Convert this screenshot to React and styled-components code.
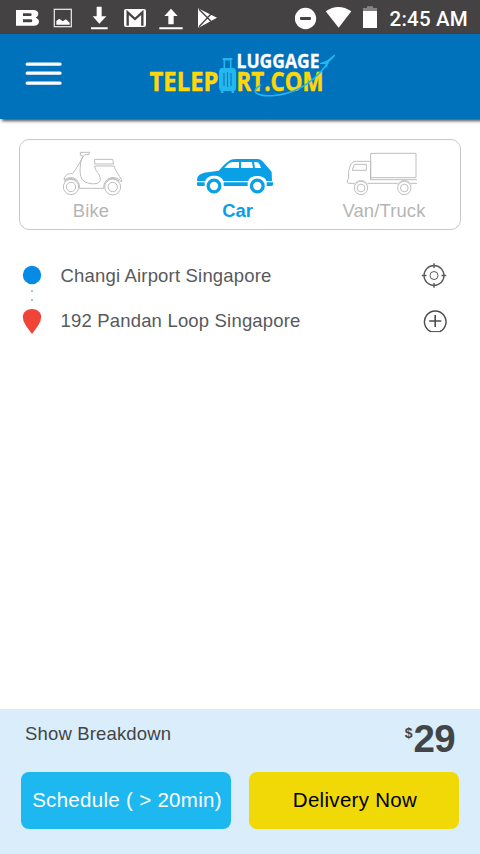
import React from 'react';
import styled, { createGlobalStyle } from 'styled-components';

const GlobalStyle = createGlobalStyle`
  * { box-sizing: border-box; }
  body { margin: 0; background: #fff; font-family: "Liberation Sans", Arial, sans-serif; }
  svg { display: block; flex: none; }
  button { font: inherit; border: 0; padding: 0; background: none; }
`;

const Screen = styled.div`
  width: 480px;
  height: 854px;
  display: flex;
  flex-direction: column;
  overflow: hidden;
  background: #fff;
`;

const StatusBar = styled.div`
  height: 34px;
  flex: none;
  display: flex;
  align-items: center;
  justify-content: space-between;
  background: #444243;
  color: #fff;
  padding-right: 12px;
`;

const StatusRight = styled.div`
  display: flex;
  align-items: center;
`;

const Clock = styled.span`
  font: 500 20.5px/34px Roboto, sans-serif;
  letter-spacing: 0.2px;
  padding-top: 4px;
  margin-left: 11px;
  white-space: nowrap;
`;

const Header = styled.header`
  height: 85px;
  flex: none;
  display: flex;
  align-items: flex-start;
  background: #0071bb;
  box-shadow: 2px 2px 3px rgba(0, 0, 0, 0.7);
`;

const MenuButton = styled.button`
  display: flex;
  margin: 26px 0 0 25px;
`;

const LogoLink = styled.div`
  margin: 10px 0 0 83px;
`;

const Main = styled.main`
  flex: 1;
  padding: 20px 19px 0;
`;

const VehicleCard = styled.div`
  height: 91px;
  display: flex;
  justify-content: space-between;
  border: 1px solid #c9c9c9;
  border-radius: 10px;
  padding: 0 34px 0 29px;
`;

const Vehicle = styled.button`
  width: 84px;
  display: flex;
  flex-direction: column;
  align-items: center;
  color: ${({ $active }) => ($active ? '#0aa0e6' : '#b5b5b5')};
`;

const VehicleArt = styled.div`
  height: 59px;
  display: flex;
  align-items: flex-end;
  padding-bottom: 3px;
  margin-left: ${({ $shift }) => $shift || 0}px;
`;

const VehicleLabel = styled.span`
  font-size: 18.4px;
  line-height: 24px;
  font-weight: ${({ $bold }) => ($bold ? 700 : 400)};
  letter-spacing: ${({ $track }) => $track}px;
  white-space: nowrap;
`;

const Route = styled.div`
  display: grid;
  grid-template-columns: 26px 1fr 26px;
  grid-template-rows: 45px 45px;
  align-items: center;
  margin-top: 23px;
  padding: 0 14px 0 0;
`;

const RouteMarks = styled.div`
  grid-row: 1 / 3;
  align-self: start;
  padding: 12px 0 0 3px;
`;

const Place = styled.span`
  font-size: 18.5px;
  line-height: 24px;
  letter-spacing: 0.18px;
  color: #58595b;
  padding-left: 15.5px;
  white-space: nowrap;
`;

const RouteAction = styled.button`
  width: 26px;
  height: 26px;
`;

const Footer = styled.footer`
  height: 145px;
  flex: none;
  background: #daedfb;
  padding: 11px 21px 0;
`;

const Summary = styled.div`
  height: 52px;
  display: flex;
  justify-content: space-between;
  align-items: flex-start;
  color: #414548;
  padding: 0 4px;
`;

const Breakdown = styled.button`
  font-size: 18.5px;
  line-height: 28px;
  letter-spacing: 0.16px;
  color: inherit;
`;

const Price = styled.div`
  display: flex;
  align-items: flex-start;
  font-weight: 700;
  font-size: 38.5px;
  line-height: 38px;
  letter-spacing: -0.6px;
`;

const Currency = styled.span`
  font-size: 14px;
  line-height: 27px;
  margin-right: 1.5px;
`;

const Actions = styled.div`
  display: flex;
  justify-content: space-between;
`;

const ActionButton = styled.button`
  width: 210px;
  height: 57px;
  border-radius: 8px;
  font-size: 20.5px;
  line-height: 55px;
  letter-spacing: 0.3px;
  padding: 0 0 2px 2px;
  white-space: nowrap;
  color: ${({ $primary }) => ($primary ? '#000' : '#fff')};
  background: ${({ $primary }) => ($primary ? '#f0d907' : '#1eb8f0')};
`;

const Notifications = () => (
  <svg width="230" height="34" viewBox="0 0 690 102" fill="#fff">
    <path fillRule="evenodd" d="M48 30H100Q115 31 115 42Q115 50 107 53Q117 56 117 65Q116 77 101 77H48ZM69 40V48H91Q95 48 95 44Q95 40 91 40ZM69 58V67H92Q97 67 97 62Q97 58 92 58Z" />
    <rect x="163" y="28" width="51" height="52" fill="none" stroke="#ddd" strokeWidth="4" />
    <path d="M169 74V63L178 56L188 64L198 58L209 68V74Z" />
    <path d="M290 20H305V49H319L298 71L278 49H290ZM273 82H323V88H273Z" />
    <rect x="372" y="27" width="66" height="54" rx="6" />
    <path d="M383 77V37L405 57L427 37V77" fill="none" stroke="#444243" strokeWidth="7" />
    <path d="M513 26L533 48H521V73H505V48H493ZM478 82H548V88H478Z" />
    <path d="M594 26Q595 24 600 28L651 53L600 81Q594 84 594 80Z" />
    <path d="M597 28L638 69M597 80L638 37" fill="none" stroke="#444243" strokeWidth="4" />
  </svg>
);

const SystemIcons = () => (
  <svg width="84" height="34" viewBox="48 0 252 102" fill="#fff">
    <circle cx="79.500" cy="55.500" r="32" />
    <rect x="63" y="51" width="33" height="9" rx="3" fill="#444243" />
    <path d="M140 34Q178 8 217 34L179 83Z" />
    <path d="M252 32H294V84H252Z" />
    <path d="M264 19H282V24H294V32H252V24H264Z" fill="#858384" />
  </svg>
);

const MenuIcon = () => (
  <svg width="37" height="28" viewBox="0 0 37 28" fill="none" stroke="#fff" strokeWidth="3.3" strokeLinecap="round">
    <path d="M2.200 4.200H35M2.200 13.200H35M2.200 23.200H35" />
  </svg>
);

const Logo = () => (
  <svg width="192" height="64" viewBox="0 -6 192 64">
    <g fontFamily="'Open Sans', 'Noto Sans', sans-serif" fontWeight="700">
      <g fill="#ffd60a" stroke="#ffd60a" strokeWidth=".5" fontSize="27.500">
        <text x="4.500" y="41.300" textLength="69" lengthAdjust="spacingAndGlyphs">TELEP</text>
        <text x="91.500" y="41.300" textLength="87" lengthAdjust="spacingAndGlyphs">RT.COM</text>
      </g>
      <text x="91.500" y="18.300" fill="#fff" stroke="#fff" strokeWidth=".3" fontSize="19.500" textLength="83" lengthAdjust="spacingAndGlyphs">LUGGAGE</text>
    </g>
    <g fill="#22b7ef">
      <path fillRule="evenodd" d="M78 8H87Q87.500 8 87.500 10H86.500V18H89Q91 19 91 22V37Q91 41 89 41V43H86.500V41H78.500V43H76V41Q74 40 74 37V22Q74 19 76 18H78.500V10H77.500Q77.500 8 78 8ZM80 10.500V18H85V10.500Z" />
      <path d="M188 5.500Q190.500 4 190 6L184 12L182 17L180.500 17.500L180.500 14L175 14L175 13L182 10.500Z" />
    </g>
    <path d="M79 23V36M82.500 22V37M86 23V36" stroke="#176fab" strokeWidth="1" />
    <path d="M116 35Q108 39 111 43C119 48 139 46 153 39C166 33 175 24 183 13" fill="none" stroke="#22b7ef" strokeWidth="1.500" />
  </svg>
);

const BikeIcon = () => (
  <svg width="62" height="46" viewBox="156 60 186 138" fill="none" stroke="#b8b8b8" strokeWidth="2.800" strokeLinejoin="round">
    <path d="M211 67H239L237 73L225 74C216 81 211 92 211 108C209 130 210 153 233 159Q247 163 258 161Q272 158 271 146C270 129 254 125 254 108H312C316 123 329 138 335 150L334 156C327 145 315 142 306 143C292 145 281 156 281 175H209C209 158 201 145 187 143Q171 142 162 150Q164 134 178 131H187C199 117 209 99 220 79L211 76Z" />
    <path d="M254 88H308L311 102H254Z" />
    <circle cx="183" cy="171" r="23" /><circle cx="183" cy="171" r="14" />
    <circle cx="308" cy="171" r="24" /><circle cx="308" cy="171" r="14" />
    <path d="M162 155Q179 137 200 152M286 154Q306 136 328 153" />
  </svg>
);

const CarIcon = () => (
  <svg width="78" height="38" viewBox="78 84 234 114" fill="#0aa0e6">
    <path fillRule="evenodd" d="M81 153C81 137 91 129 113 127L146 122C157 110 168 98 181 90Q187 87 200 87H264Q273 87 279 95C288 106 298 116 305 126L306 153H289C284 133 239 133 235 153H160C154 132 111 132 106 153ZM163 114H207V96H188Q178 97 173 103ZM213 96V114H249L246 96ZM252 96L255 114H273Q269 100 263 97Z" />
    <path d="M81 157H104V168H84Q81 168 81 163ZM161 157H233V168H161ZM290 157H309V164Q308 168 303 168H290Z" />
    <circle cx="132" cy="168" r="17.500" fill="#fff" stroke="#0aa0e6" strokeWidth="10" />
    <circle cx="262" cy="168" r="17.500" fill="#fff" stroke="#0aa0e6" strokeWidth="10" />
  </svg>
);

const TruckIcon = () => (
  <svg width="72" height="45" viewBox="78 63 216 135" fill="none" stroke="#b8b8b8" strokeWidth="2.800">
    <path d="M152 70H288V143H152ZM152 94H109Q96 94 91 106L86 123V146L82 150V158L86 160H103M143 160H233M272 160H291M152 143V149H291M152 94V149M97 120L102 105Q104 103 108 103H139V121H97Z" />
    <circle cx="123" cy="174" r="20" /><circle cx="123" cy="174" r="11.500" />
    <circle cx="253" cy="174" r="20" /><circle cx="253" cy="174" r="11.500" />
    <path d="M101 164Q123 137 145 164M231 164Q253 137 275 164" strokeWidth="2" />
  </svg>
);

const RouteIcon = () => (
  <svg width="20" height="70" viewBox="0 0 20 70">
    <circle cx="10" cy="10" r="9.200" fill="#058be6" />
    <path d="M9 25H11V27H9ZM9 34H11V36H9Z" fill="#a5c1d5" />
    <path d="M10 69Q7 65 3.800 60.500Q.8 56 .8 52C.8 47 5 44 10 44S19.200 47 19.200 52Q19.200 56 16.200 60.500Q13 65 10 69Z" fill="#f04438" />
  </svg>
);

const TargetIcon = () => (
  <svg width="26" height="26" viewBox="0 0.500 26 26" fill="none" stroke="#58595b">
    <circle cx="13" cy="13" r="10" strokeWidth="1.300" />
    <circle cx="13" cy="13" r="4" strokeWidth="1" />
    <path d="M13 .8V5.500M13 20.500V25.200M.8 13H5.500M20.500 13H25.200" strokeWidth="1.400" />
  </svg>
);

const AddIcon = () => (
  <svg width="26" height="26" viewBox="0 0 26 26" fill="none" stroke="#4b4c4e">
    <path d="M9.500 23.500A10.800 10.800 0 1 1 19 23.500" strokeWidth="1.400" />
    <path d="M9 23.600H19.500" strokeWidth="1" />
    <path d="M14.200 7V19M8.200 13H20.200" strokeWidth="1.600" />
  </svg>
);

const vehicles = [
  { name: 'Bike', Icon: BikeIcon, shift: 4, track: 0.2 },
  { name: 'Car', Icon: CarIcon, shift: -5, track: 0, active: true },
  { name: 'Van/Truck', Icon: TruckIcon, shift: -4, track: 0.15 },
];

export default function App() {
  return (
    <Screen>
      <GlobalStyle />
      <StatusBar>
        <Notifications />
        <StatusRight>
          <SystemIcons />
          <Clock>2:45 AM</Clock>
        </StatusRight>
      </StatusBar>
      <Header>
        <MenuButton aria-label="Menu"><MenuIcon /></MenuButton>
        <LogoLink><Logo /></LogoLink>
      </Header>
      <Main>
        <VehicleCard>
          {vehicles.map(({ name, Icon, shift, track, active }) => (
            <Vehicle key={name} $active={active}>
              <VehicleArt $shift={shift}><Icon /></VehicleArt>
              <VehicleLabel $bold={active} $track={track}>{name}</VehicleLabel>
            </Vehicle>
          ))}
        </VehicleCard>
        <Route>
          <RouteMarks><RouteIcon /></RouteMarks>
          <Place>Changi Airport Singapore</Place>
          <RouteAction aria-label="Locate"><TargetIcon /></RouteAction>
          <Place>192 Pandan Loop Singapore</Place>
          <RouteAction aria-label="Add stop"><AddIcon /></RouteAction>
        </Route>
      </Main>
      <Footer>
        <Summary>
          <Breakdown>Show Breakdown</Breakdown>
          <Price><Currency>$</Currency>29</Price>
        </Summary>
        <Actions>
          <ActionButton>Schedule ( &gt; 20min)</ActionButton>
          <ActionButton $primary>Delivery Now</ActionButton>
        </Actions>
      </Footer>
    </Screen>
  );
}
